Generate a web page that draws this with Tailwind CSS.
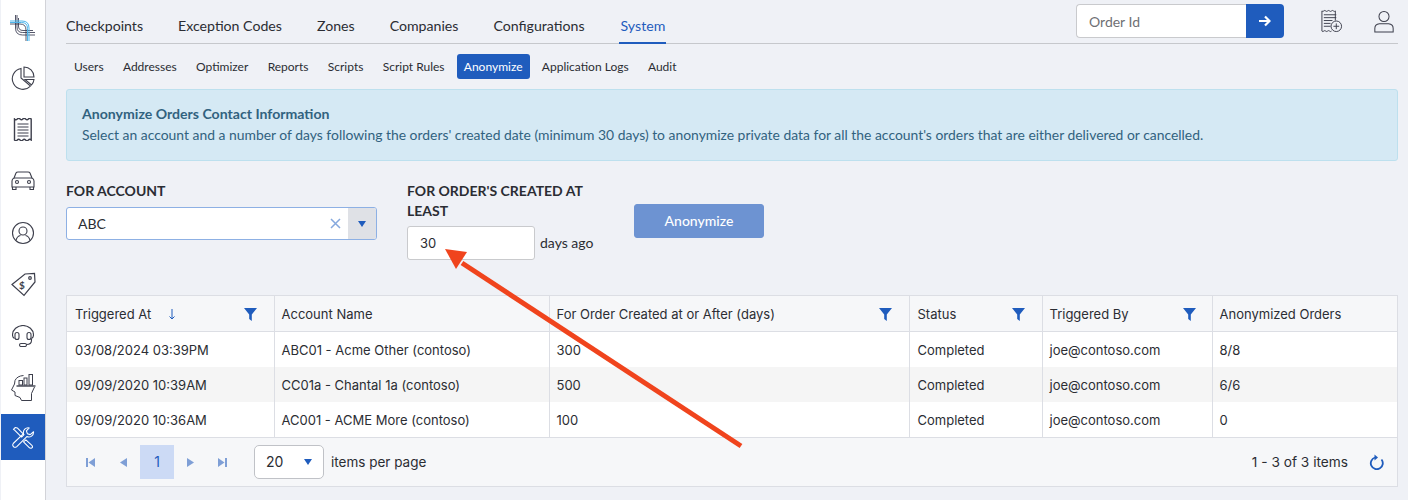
<!DOCTYPE html>
<html lang="en">
<head>
<meta charset="UTF-8">
<title>Anonymize</title>
<script src="https://cdn.jsdelivr.net/npm/@tailwindcss/browser@4"></script>
</head>
<body class="bg-[#eff1f6] font-['Lato',sans-serif] text-[#2b2d33] overflow-hidden">
<div class="relative flex h-[500px] w-[1408px] overflow-hidden">
  <!-- Sidebar -->
  <aside class="ml-px flex h-full w-[45px] shrink-0 flex-col items-center border-r border-[#d2d3d8] bg-white pt-[4px]">
    <div class="flex h-[48px] w-full items-center justify-center">
      <svg width="28" height="28" viewBox="0 0 28 28" fill="none" stroke-width=".8">
        <path d="M6.500 1v13q0 7 7 7H26M8 1v12q0 5.500 5.500 5.500H26" stroke="#2b2d45"/>
        <path d="M9.500 4v8q0 4.500 4.500 4.500h10" stroke="#2b2d45"/>
        <path d="M1 10h10q6 0 6 6v11" stroke="#2b2d45"/>
        <path d="M1 7h12q7 0 7 7v13M1 8.500h11.500q6 0 6 6V27" stroke="#4db4ea" stroke-width="1"/>
      </svg>
    </div>
    <div class="flex h-[52px] w-full items-center justify-center">
      <svg width="24" height="24" viewBox="0 0 24 24" fill="none" stroke="#3d3f4c" stroke-width="1.100">
        <path d="M10 2.500a10.500 10.500 0 1 0 9.500 17.500l-9.500-8z"/>
        <path d="M13 1a10 10 0 0 1 10 10H13z"/>
        <path d="M14 13.500h9a10 10 0 0 1-2.500 5.500z"/>
      </svg>
    </div>
    <div class="flex h-[51px] w-full items-center justify-center">
      <svg width="20" height="23" viewBox="0 0 20 23" fill="none" stroke="#3d3f4c" stroke-width="1.100">
        <path d="M1.500 1q1.400 1.500 2.800 0t2.800 0 2.700 0 2.800 0 2.800 0 2.800 0v21q-1.400-1.500-2.800 0t-2.800 0-2.700 0-2.800 0-2.800 0-2.800 0z" stroke-width="1.400"/>
        <path d="M4.500 6h11M4.500 9h11M4.500 12h11M4.500 15h11M4.500 18h11"/>
      </svg>
    </div>
    <div class="flex h-[52px] w-full items-center justify-center">
      <svg width="24" height="20" viewBox="0 0 24 20" fill="none" stroke="#3d3f4c" stroke-width="1.100">
        <path d="M1 16v-6q0-2 2-3l2-5q.5-1 2-1h10q1.500 0 2 1l2 5q2 1 2 3v6z"/>
        <path d="M3 7h18M1.500 16v2.500h3.500V16M19 16v2.500h3.500V16"/>
        <circle cx="6" cy="11" r="1.500"/><circle cx="18" cy="11" r="1.500"/>
      </svg>
    </div>
    <div class="flex h-[51px] w-full items-center justify-center">
      <svg width="24" height="24" viewBox="0 0 24 24" fill="none" stroke="#3d3f4c" stroke-width="1.100">
        <circle cx="12" cy="12" r="10.500"/><circle cx="12" cy="10" r="4"/>
        <path d="M5 19.500q1-4.500 4.500-5M19 19.500q-1-4.500-4.500-5"/>
      </svg>
    </div>
    <div class="flex h-[52px] w-full items-center justify-center">
      <svg width="25" height="25" viewBox="0 0 25 25" fill="none" stroke="#3d3f4c" stroke-width="1.200">
        <path d="M1 12.500L14 2l9.500-.5.500 8.500L13 23.500z"/>
        <circle cx="19" cy="6" r="1.300"/>
        <text x="8" y="17" font-size="10" font-weight="700" fill="#3d3f4c" stroke="none" font-family="Lato">$</text>
      </svg>
    </div>
    <div class="flex h-[51px] w-full items-center justify-center">
      <svg width="22" height="22" viewBox="0 0 22 22" fill="none" stroke="#3d3f4c" stroke-width="1.100">
        <path d="M2.500 13.500Q.5 12.500.5 10a10.500 9.500 0 0 1 21 0q0 2.500-2 3.500"/>
        <rect x="3" y="7.500" width="4" height="7" rx="2"/><rect x="15" y="7.500" width="4" height="7" rx="2"/>
        <path d="M19.500 13.500v2q0 4-5 4"/>
        <rect x="7.500" y="18.500" width="7" height="3" rx="1.500"/>
      </svg>
    </div>
    <div class="flex h-[52px] w-full items-center justify-center">
      <svg width="25" height="27" viewBox="0 0 25 27" fill="none" stroke="#3d3f4c" stroke-width="1">
        <path d="M12.500 1.500Q6 2 4 6.500L3.500 10 .5 16l3.500 2v3.500L9 23.500l1.500 3h10v-7l3-6.500"/>
        <path d="M5.500 12h19" stroke-width="1.400"/>
        <rect x="8" y="6.500" width="3.500" height="4.500"/><rect x="13" y="4" width="3" height="7"/><rect x="18" y=".5" width="3.500" height="10.500"/>
      </svg>
    </div>
    <div class="mt-px flex h-[46px] w-full items-center justify-center bg-[#1f5cbd]">
      <svg width="23" height="23" viewBox="0 0 24 24" fill="none" stroke="#ffffff" stroke-width="1.100" stroke-linejoin="round">
        <path d="M1.500 3.500L3.500 1.500l2 .5 7 7-2.500 2.500-7-7z"/>
        <path d="M22.500 6a5 5 0 0 1-7 5L5 21.500q-2 1.500-3.500 0t0-3.500L12 8a5 5 0 0 1 6-6l-3 3 1 3 3 1z"/>
        <path d="M14.500 14.500l6.500 6q1 2-.5 2.500t-2.500-.5l-6-6z"/>
      </svg>
    </div>
  </aside>

  <main class="flex min-w-0 flex-1 flex-col pl-5 pr-[10px]">
    <!-- Top navigation -->
    <div class="flex h-[44px] shrink-0 items-stretch justify-between border-b border-[#c6c8cc]">
      <nav class="flex items-stretch gap-[35px] text-[14.150px] leading-none">
        <a class="flex items-center pt-[10px]">Checkpoints</a>
        <a class="flex items-center pt-[10px]">Exception Codes</a>
        <a class="flex items-center pt-[10px]">Zones</a>
        <a class="flex items-center pt-[10px]">Companies</a>
        <a class="flex items-center pt-[10px]">Configurations</a>
        <a class="-mb-px -ml-px flex items-center border-b-2 border-[#1f5cbd] pt-[10px] pr-px pl-[2px] text-[#1f5cbd]">System</a>
      </nav>
      <div class="flex items-start gap-9 pr-[3px] pt-1">
        <div class="flex h-[34px] w-[208px]">
          <input placeholder="Order Id" class="h-full min-w-0 flex-1 rounded-l border border-r-0 border-[#c9cacd] bg-white pl-3 text-sm placeholder:text-[#6f7074]">
          <button class="flex h-full w-[38px] items-center justify-center rounded-r bg-[#1f5cbd]">
            <svg width="12" height="12" viewBox="0 0 12 12" fill="none" stroke="#fff" stroke-width="2.200"><path d="M0 6h10M6 1.500L10.500 6 6 10.500"/></svg>
          </button>
        </div>
        <div class="flex items-center gap-[30px] pt-[5px]">
          <svg width="23" height="24" viewBox="0 0 24 25" fill="none" stroke="#3d3f4c" stroke-width="1">
            <path d="M12 23q-1 1-2 0t-2 0-2 0-2 0-2 0V2q1 1 2 0t2 0 2 0 2 0 2 0 2 0 2 0v10"/>
            <path d="M4 6h13M4 9h13M4 12h9M4 15h7M4 18h7"/>
            <circle cx="17" cy="18" r="5.500" fill="#eff1f6"/><path d="M17 15v6M14 18h6"/>
          </svg>
          <svg width="22" height="23" viewBox="0 0 24 25" fill="none" stroke="#3d3f4c" stroke-width="1.100">
            <circle cx="12" cy="7" r="5.500"/>
            <path d="M2 24v-4q0-4.500 5-5h10q5 .5 5 5v4z"/>
          </svg>
        </div>
      </div>
    </div>

    <!-- Sub navigation -->
    <nav class="mt-[10px] flex h-[25px] shrink-0 items-center gap-[19.300px] pl-2 text-xs">
      <a class="pt-px">Users</a>
      <a class="pt-px">Addresses</a>
      <a class="pt-px">Optimizer</a>
      <a class="pt-px">Reports</a>
      <a class="pt-px">Scripts</a>
      <a class="pt-px">Script Rules</a>
      <a class="-mx-[7px] flex h-[25px] items-center rounded-[3px] bg-[#1f5cbd] px-[7px] pt-px text-white">Anonymize</a>
      <a class="pt-px">Application Logs</a>
      <a class="pt-px">Audit</a>
    </nav>

    <!-- Info banner -->
    <div class="mt-[10px] h-[72px] shrink-0 rounded-[3px] border border-[#bde0ee] bg-[#d5e9f4] px-[15px] pt-[14px] text-[#31627f]">
      <h2 class="text-[14.100px] leading-[20px] font-bold">Anonymize Orders Contact Information</h2>
      <p class="mt-px text-[13.900px] leading-[20px]">Select an account and a number of days following the orders' created date (minimum 30 days) to anonymize private data for all the account's orders that are either delivered or cancelled.</p>
    </div>

    <!-- Form -->
    <div class="mt-[10px] flex h-[124px] shrink-0 items-start text-sm">
      <div class="w-[311px]">
        <label class="mt-[10px] block leading-[20px] font-bold">FOR ACCOUNT</label>
        <div class="mt-[6px] flex h-[33px] overflow-hidden rounded-[3px] border border-[#8db0e4] bg-white">
          <span class="flex flex-1 items-center pl-[11px]">ABC</span>
          <span class="flex w-[26px] items-center justify-center">
            <svg width="11" height="11" viewBox="0 0 11 11" fill="none" stroke="#85a8de" stroke-width="1.500"><path d="M1 1l9 9M10 1l-9 9"/></svg>
          </span>
          <span class="flex w-[28px] items-center justify-center bg-[#dfe1e6]">
            <svg width="8" height="6" viewBox="0 0 8 6" fill="#1f5cbd"><path d="M0 0h8L4 6z"/></svg>
          </span>
        </div>
      </div>
      <div class="ml-[30px] w-[200px]">
        <label class="mt-[10px] block leading-[20px] font-bold">FOR ORDER'S CREATED AT LEAST</label>
        <div class="mt-[5px] flex items-center gap-[5px]">
          <input value="30" class="h-[34px] w-[128px] rounded-[3px] border border-[#c9cacd] bg-white pl-3 font-['Inter',sans-serif] text-[13px]">
          <span>days ago</span>
        </div>
      </div>
      <button class="mt-[33px] ml-[27px] h-[34px] w-[130px] rounded-[3px] border border-[#6d93d2] bg-[#6d93d2] text-sm font-medium text-white">Anonymize</button>
    </div>

    <!-- Table -->
    <div class="shrink-0 border border-[#dcdee4] bg-white font-['Inter',sans-serif] text-[13px]">
      <table class="w-full table-fixed border-collapse">
        <colgroup>
          <col class="w-[207px]"><col class="w-[275px]"><col class="w-[360px]"><col class="w-[133px]"><col class="w-[170px]"><col>
        </colgroup>
        <thead class="bg-[#f6f7f9]">
          <tr class="h-[35px] text-left">
            <th class="border-r border-b border-[#dcdee4] px-2 pt-[3px] font-normal">
              <div class="flex items-center justify-between pr-[9px]">
                <span class="flex items-center gap-[17px]">Triggered At
                  <svg width="8" height="11" viewBox="0 0 8 11" fill="none" stroke="#1f5cbd" stroke-width="1"><path d="M4 0v10M1.500 7.500L4 10l2.500-2.500"/></svg>
                </span>
                <svg width="13" height="13" viewBox="0 0 13 13" fill="#1f5cbd"><path d="M0 0h13L7.800 6.500V13L5.200 11V6.500z"/></svg>
              </div>
            </th>
            <th class="border-r border-b border-[#dcdee4] pt-[3px] pr-2 pl-[7px] font-normal">Account Name</th>
            <th class="border-r border-b border-[#dcdee4] pt-[3px] pr-2 pl-[7px] font-normal">
              <div class="flex items-center justify-between pr-[9px]">For Order Created at or After (days)
                <svg width="13" height="13" viewBox="0 0 13 13" fill="#1f5cbd"><path d="M0 0h13L7.800 6.500V13L5.200 11V6.500z"/></svg>
              </div>
            </th>
            <th class="border-r border-b border-[#dcdee4] px-2 pt-[3px] font-normal">
              <div class="flex items-center justify-between pr-[9px]">Status
                <svg width="13" height="13" viewBox="0 0 13 13" fill="#1f5cbd"><path d="M0 0h13L7.800 6.500V13L5.200 11V6.500z"/></svg>
              </div>
            </th>
            <th class="border-r border-b border-[#dcdee4] pt-[3px] pr-2 pl-[7px] font-normal">
              <div class="flex items-center justify-between pr-[8px]">Triggered By
                <svg width="13" height="13" viewBox="0 0 13 13" fill="#1f5cbd"><path d="M0 0h13L7.800 6.500V13L5.200 11V6.500z"/></svg>
              </div>
            </th>
            <th class="border-b border-[#dcdee4] pt-[3px] pr-2 pl-[7px] font-normal">Anonymized Orders</th>
          </tr>
        </thead>
        <tbody>
          <tr class="h-[36px]">
            <td class="border-r border-[#dcdee4] px-2 pt-[3px]">03/08/2024 03:39PM</td>
            <td class="border-r border-[#dcdee4] pt-[3px] pr-2 pl-[7px]">ABC01 - Acme Other (contoso)</td>
            <td class="border-r border-[#dcdee4] pt-[3px] pr-2 pl-[7px]">300</td>
            <td class="border-r border-[#dcdee4] px-2 pt-[3px]">Completed</td>
            <td class="border-r border-[#dcdee4] pt-[3px] pr-2 pl-[7px]">joe@contoso.com</td>
            <td class="pt-[3px] pr-2 pl-[7px]">8/8</td>
          </tr>
          <tr class="h-[35px] bg-[#f5f5f5]">
            <td class="border-r border-[#dcdee4] px-2 pt-[3px]">09/09/2020 10:39AM</td>
            <td class="border-r border-[#dcdee4] pt-[3px] pr-2 pl-[7px]">CC01a - Chantal 1a (contoso)</td>
            <td class="border-r border-[#dcdee4] pt-[3px] pr-2 pl-[7px]">500</td>
            <td class="border-r border-[#dcdee4] px-2 pt-[3px]">Completed</td>
            <td class="border-r border-[#dcdee4] pt-[3px] pr-2 pl-[7px]">joe@contoso.com</td>
            <td class="pt-[3px] pr-2 pl-[7px]">6/6</td>
          </tr>
          <tr class="h-[35px]">
            <td class="border-r border-[#dcdee4] px-2 pt-[3px]">09/09/2020 10:36AM</td>
            <td class="border-r border-[#dcdee4] pt-[3px] pr-2 pl-[7px]">AC001 - ACME More (contoso)</td>
            <td class="border-r border-[#dcdee4] pt-[3px] pr-2 pl-[7px]">100</td>
            <td class="border-r border-[#dcdee4] px-2 pt-[3px]">Completed</td>
            <td class="border-r border-[#dcdee4] pt-[3px] pr-2 pl-[7px]">joe@contoso.com</td>
            <td class="pt-[3px] pr-2 pl-[7px]">0</td>
          </tr>
        </tbody>
      </table>
      <!-- Pager -->
      <div class="flex h-[49px] items-center justify-between border-t border-[#dcdee4] bg-[#f6f7f9] pr-[13px] pl-[6px]">
        <div class="flex items-center">
          <span class="flex h-[34px] w-[34px] items-center justify-center">
            <svg width="9" height="9" viewBox="0 0 9 9" fill="#7f9fd6"><path d="M0 0h2v9H0zM9 0v9L2.500 4.500z"/></svg>
          </span>
          <span class="flex h-[34px] w-[33px] items-center justify-center">
            <svg width="7" height="9" viewBox="0 0 7 9" fill="#7f9fd6"><path d="M7 0v9L0 4.500z"/></svg>
          </span>
          <span class="flex h-[34px] w-[34px] items-center justify-center bg-[#ccdaf5] text-sm text-[#1f5cbd]">1</span>
          <span class="flex h-[34px] w-[33px] items-center justify-center">
            <svg width="7" height="9" viewBox="0 0 7 9" fill="#7f9fd6"><path d="M0 0v9l7-4.500z"/></svg>
          </span>
          <span class="flex h-[34px] w-[30px] items-center justify-center">
            <svg width="9" height="9" viewBox="0 0 9 9" fill="#7f9fd6"><path d="M9 0H7v9h2zM0 0v9l6.500-4.500z"/></svg>
          </span>
          <span class="ml-[17px] flex h-[34px] w-[70px] items-center justify-between rounded-[5px] border border-[#c0c2c7] bg-white px-[11px] text-sm">20
            <svg width="8" height="6" viewBox="0 0 8 6" fill="#1f5cbd"><path d="M0 0h8L4 6z"/></svg>
          </span>
          <span class="ml-[7px] text-[13.500px]">items per page</span>
        </div>
        <div class="flex items-center gap-[21px]">
          <span class="text-[13.700px]">1 - 3 of 3 items</span>
          <svg width="15" height="16" viewBox="0 0 15 16" fill="none" stroke="#1f5cbd" stroke-width="1.800">
            <path d="M6 3.500a6 6 0 1 0 6.500 2"/><path d="M5.500 0.500v6l3.500-3z" fill="#1f5cbd" stroke="none"/>
          </svg>
        </div>
      </div>
    </div>
  </main>

  <!-- Annotation arrow drawn over the page -->
  <svg class="pointer-events-none absolute top-0 left-0" width="1408" height="500" viewBox="0 0 1408 500" fill="none">
    <path d="M741 446L462 263" stroke="#f0441d" stroke-width="5"/>
    <path d="M445 249L467 252L456 269z" fill="#f0441d"/>
  </svg>
</div>
</body>
</html>
